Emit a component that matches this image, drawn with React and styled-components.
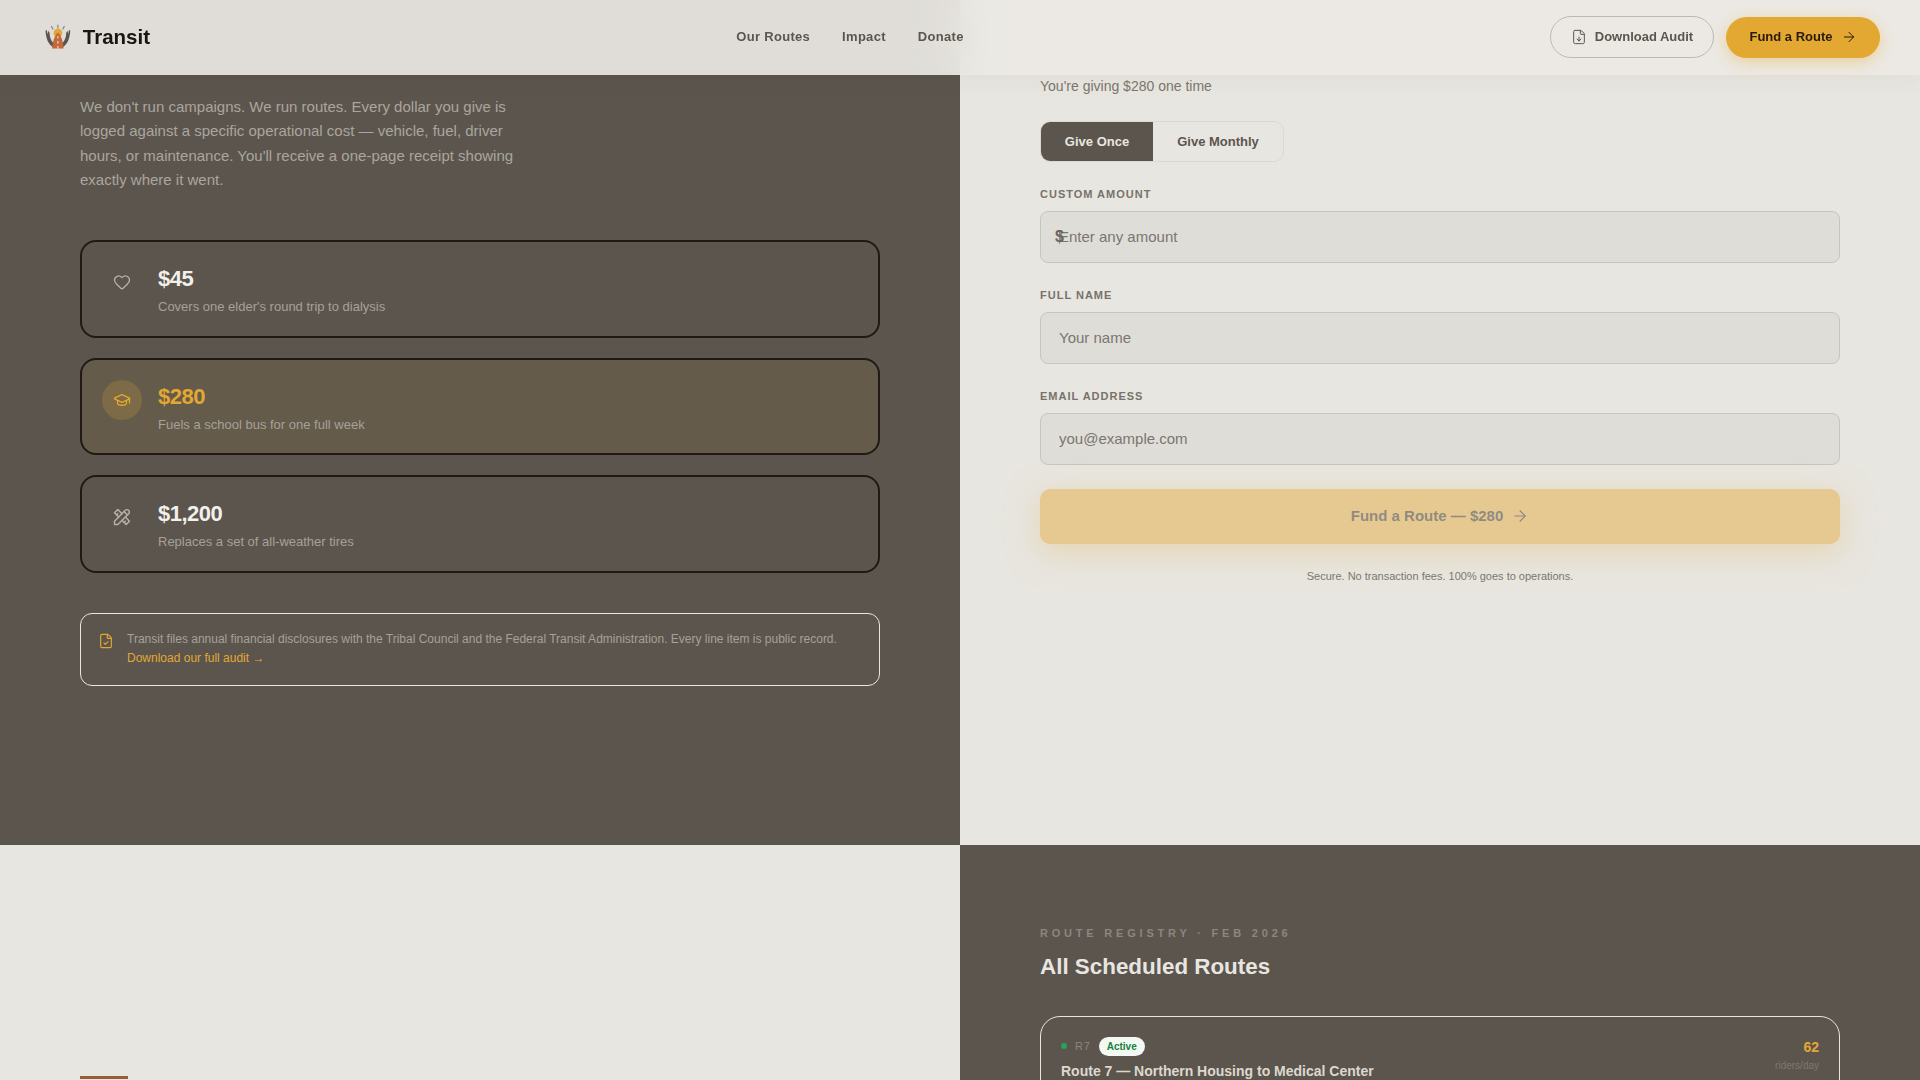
import React from 'react';
import styled, { createGlobalStyle } from 'styled-components';
import { ArrowRight, FileCheck, FileDown, GraduationCap, Heart } from 'lucide-react';
import { TbTools } from 'react-icons/tb';

const GlobalStyle = createGlobalStyle`
    * { box-sizing: border-box; }
    body {
        margin: 0;
        background: #e8e6e0;
        font-family: "Liberation Sans", Arial, sans-serif;
        color: #1a1510;
    }
`;

const tiers = [
    { amount: '$45', text: "Covers one elder's round trip to dialysis", Icon: Heart, size: 18 },
    { amount: '$280', text: 'Fuels a school bus for one full week', Icon: GraduationCap, size: 18, selected: true },
    { amount: '$1,200', text: 'Replaces a set of all-weather tires', Icon: TbTools, size: 20 },
];

const fields = [
    { label: 'Custom amount', placeholder: 'Enter any amount', prefix: true },
    { label: 'Full name', placeholder: 'Your name' },
    { label: 'Email address', placeholder: 'you@example.com' },
];

function Logo() {
    return (
        <svg width="28" height="26" viewBox="0 0 28 26" aria-hidden="true">
            <g stroke="#8d857b" strokeWidth="1.2" strokeLinecap="round">
                <path d="M9 5 7.6 2.4M14 4V1M19 5l1.4-2.6" />
            </g>
            <circle cx="14" cy="9" r="4.4" fill="#e2a832" />
            <path d="M1.5 7c.6 6 1.6 11 5.5 14.5l3.5 3-.4-5C7 17 5.6 13 5.6 8.6L4.4 6.6 3.6 10 2.8 5.8z" fill="#5c554e" />
            <path d="M26.5 7c-.6 6-1.6 11-5.5 14.5l-3.5 3 .4-5C21 17 22.4 13 22.4 8.6l1.2-2 .8 3.4.8-4.2z" fill="#5c554e" />
            <path d="M14 8.5c3 2.6 5 7.6 5.8 16H8.200C9 16 11 11.1 14 8.500z" fill="#c4683a" />
            <path d="M14 12v2.500M14 17v2.500M14 22v2.500" stroke="#f0d9b0" strokeWidth="1.2" />
        </svg>
    );
}

export default function App() {
    return (
        <Shell>
            <GlobalStyle />
            <Nav>
                <Brand>
                    <Logo />
                    <BrandName>Transit</BrandName>
                </Brand>
                <NavLinks>
                    <NavLink href="#">Our Routes</NavLink>
                    <NavLink href="#">Impact</NavLink>
                    <NavLink href="#">Donate</NavLink>
                </NavLinks>
                <NavActions>
                    <AuditButton>
                        <FileDown size={16} strokeWidth={1.5} />
                        Download Audit
                    </AuditButton>
                    <FundButton>
                        Fund a Route
                        <ArrowRight size={16} strokeWidth={1.5} />
                    </FundButton>
                </NavActions>
            </Nav>

            <Page>
                <Split>
                    <DarkPanel>
                        <Lead>
                            We don't run campaigns. We run routes. Every dollar you give is logged against a
                            specific operational cost — vehicle, fuel, driver hours, or maintenance. You'll
                            receive a one-page receipt showing exactly where it went.
                        </Lead>
                        <Tiers>
                            {tiers.map(({ amount, text, Icon, size, selected }) => (
                                <Tier key={amount} $selected={selected}>
                                    <TierIcon $selected={selected}>
                                        <Icon size={size} strokeWidth={1.75} />
                                    </TierIcon>
                                    <div>
                                        <TierAmount $selected={selected}>{amount}</TierAmount>
                                        <TierText>{text}</TierText>
                                    </div>
                                </Tier>
                            ))}
                        </Tiers>
                        <AuditNote>
                            <AuditIcon>
                                <FileCheck size={16} strokeWidth={1.75} />
                            </AuditIcon>
                            <p>
                                Transit files annual financial disclosures with the Tribal Council and the
                                Federal Transit Administration. Every line item is public record.{' '}
                                <a href="#">Download our full audit →</a>
                            </p>
                        </AuditNote>
                    </DarkPanel>

                    <LightPanel>
                        <FormSub>You're giving $280 one time</FormSub>
                        <Toggle>
                            <ToggleOption $active>Give Once</ToggleOption>
                            <ToggleOption>Give Monthly</ToggleOption>
                        </Toggle>
                        {fields.map(field => (
                            <Field key={field.label}>
                                <FieldLabel>{field.label}</FieldLabel>
                                <InputWrap>
                                    {field.prefix && <Prefix>$</Prefix>}
                                    <Input placeholder={field.placeholder} />
                                </InputWrap>
                            </Field>
                        ))}
                        <SubmitButton>
                            Fund a Route — $280
                            <ArrowRight size={18} strokeWidth={1.5} />
                        </SubmitButton>
                        <Secure>Secure. No transaction fees. 100% goes to operations.</Secure>
                    </LightPanel>
                </Split>

                <Split>
                    <StoryPanel>
                        <AccentBar />
                    </StoryPanel>
                    <RegistryPanel>
                        <Eyebrow>Route Registry · Feb 2026</Eyebrow>
                        <RegistryTitle>All Scheduled Routes</RegistryTitle>
                        <RouteCard>
                            <div>
                                <RouteMeta>
                                    <StatusDot />
                                    <RouteCode>R7</RouteCode>
                                    <StatusPill>Active</StatusPill>
                                </RouteMeta>
                                <RouteName>Route 7 — Northern Housing to Medical Center</RouteName>
                            </div>
                            <Riders>
                                <strong>62</strong>
                                <span>riders/day</span>
                            </Riders>
                        </RouteCard>
                    </RegistryPanel>
                </Split>
            </Page>
        </Shell>
    );
}

const Shell = styled.div`
    position: relative;
    height: 100vh;
    overflow: hidden;
`;

const Nav = styled.nav`
    position: fixed;
    top: 0;
    left: 0;
    right: 0;
    z-index: 10;
    height: 75px;
    padding: 0 40px 1px;
    display: flex;
    align-items: center;
    justify-content: space-between;
    background: rgba(235, 233, 228, 0.92);
    backdrop-filter: blur(20px);
    box-shadow: 0 4px 24px rgba(60, 50, 40, 0.05);
`;

const Brand = styled.div`
    display: flex;
    align-items: center;
    gap: 11px;
    width: 110px;
    padding-left: 4px;
`;

const BrandName = styled.span`
    font-size: 20.5px;
    font-weight: 700;
    color: #1a1510;
`;

const NavLinks = styled.div`
    display: flex;
    gap: 32px;
    padding-bottom: 2px;
`;

const NavLink = styled.a`
    font-size: 13px;
    font-weight: 700;
    letter-spacing: 0.3px;
    color: #5c554e;
    text-decoration: none;
`;

const NavActions = styled.div`
    display: flex;
    align-items: center;
    gap: 12px;
`;

const AuditButton = styled.button`
    height: 42px;
    width: 164px;
    padding: 0 0 1px;
    display: flex;
    align-items: center;
    justify-content: center;
    gap: 8px;
    background: transparent;
    border: 1px solid #bdb9b2;
    border-radius: 999px;
    font: 700 13px "Liberation Sans", Arial, sans-serif;
    color: #5c554e;
`;

const FundButton = styled.button`
    height: 41px;
    width: 154px;
    padding: 0 0 1px;
    display: flex;
    align-items: center;
    justify-content: center;
    gap: 8px;
    background: #e2a832;
    border: none;
    border-radius: 999px;
    box-shadow: 0 4px 16px rgba(226, 168, 50, 0.4);
    font: 700 13px "Liberation Sans", Arial, sans-serif;
    color: #2a1a0e;
`;

/* the page sits scrolled down a little, the nav stays on top of it */
const Page = styled.main`
    margin-top: -120px;
`;

const Split = styled.section`
    display: grid;
    grid-template-columns: 960px 960px;
`;

const DarkPanel = styled.div`
    height: 965px;
    padding: 215px 80px 0;
    background: #5c554e;
`;

const Lead = styled.p`
    margin: 0 0 48px;
    max-width: 440px;
    font-size: 15px;
    line-height: 24.3px;
    color: #aaa69e;
`;

const Tiers = styled.div`
    display: flex;
    flex-direction: column;
    gap: 20px;
`;

const Tier = styled.div`
    height: 97.5px;
    padding: 20px;
    display: flex;
    gap: 16px;
    border: 2px solid #1f1a15;
    border-radius: 16px;
    background: ${p => (p.$selected ? '#645b4b' : 'transparent')};
`;

const TierIcon = styled.div`
    width: 40px;
    height: 40px;
    flex-shrink: 0;
    display: flex;
    align-items: center;
    justify-content: center;
    border-radius: 50%;
    background: ${p => (p.$selected ? 'rgba(226, 168, 50, 0.2)' : 'transparent')};
    color: ${p => (p.$selected ? '#e2a832' : '#b5b1a9')};
`;

const TierAmount = styled.div`
    font-size: 22px;
    line-height: 34px;
    font-weight: 700;
    letter-spacing: -0.5px;
    color: ${p => (p.$selected ? '#e2a832' : '#f2f0eb')};
`;

const TierText = styled.div`
    margin-top: 1px;
    font-size: 13px;
    line-height: 19px;
    color: #a5a199;
`;

const AuditNote = styled.div`
    margin-top: 40.5px;
    padding: 16px;
    display: flex;
    gap: 13px;
    border: 1px solid #e8e6e0;
    border-radius: 12px;

    p {
        margin: 0;
        font-size: 12px;
        line-height: 19.2px;
        color: #a5a199;
    }
    a {
        color: #e2a832;
        text-decoration: none;
    }
`;

const AuditIcon = styled.div`
    flex-shrink: 0;
    height: 20px;
    padding: 3px 0 0 1px;
    color: #e2a832;
`;

const LightPanel = styled.div`
    height: 965px;
    padding: 195px 80px 0;
    background: #e8e6e0;
`;

const FormSub = styled.p`
    margin: 0 0 24px;
    font-size: 14px;
    line-height: 22px;
    color: #7b766f;
`;

const Toggle = styled.div`
    width: fit-content;
    height: 41px;
    margin-bottom: 24px;
    display: flex;
    border: 1px solid #dcd9d2;
    border-radius: 10px;
    overflow: hidden;
`;

const ToggleOption = styled.button`
    width: ${p => (p.$active ? '112px' : '130px')};
    border: none;
    background: ${p => (p.$active ? '#5c554e' : 'transparent')};
    font: 700 13px "Liberation Sans", Arial, sans-serif;
    color: ${p => (p.$active ? '#e8e6e0' : '#5c554e')};
`;

const Field = styled.div`
    margin-bottom: 24px;
`;

const FieldLabel = styled.label`
    display: block;
    margin-bottom: 9px;
    font-size: 11px;
    line-height: 16px;
    font-weight: 700;
    letter-spacing: 1px;
    text-transform: uppercase;
    color: #77726b;
`;

const InputWrap = styled.div`
    position: relative;
`;

const Prefix = styled.span`
    position: absolute;
    left: 15px;
    top: 50%;
    transform: translateY(-52%);
    font-size: 16px;
    font-weight: 700;
    color: #6b665f;
`;

const Input = styled.input`
    display: block;
    width: 100%;
    height: 52px;
    padding: 0 18px 2px;
    background: #dfddd8;
    border: 1px solid #c8c5be;
    border-radius: 8px;
    font: 15px "Liberation Sans", Arial, sans-serif;
    color: #1a1510;
    &::placeholder {
        color: #7b766f;
        opacity: 1;
    }
`;

const SubmitButton = styled.button`
    width: 100%;
    height: 55px;
    padding-bottom: 3px;
    display: flex;
    align-items: center;
    justify-content: center;
    gap: 8px;
    border: none;
    border-radius: 10px;
    background: #e2a832;
    box-shadow: 0 8px 32px rgba(226, 168, 50, 0.6);
    opacity: 0.45;
    font: 700 15px "Liberation Sans", Arial, sans-serif;
    color: #2a1a0e;
`;

const Secure = styled.p`
    margin: 24px 0 0;
    text-align: center;
    font-size: 11px;
    line-height: 16px;
    color: #7b766f;
`;

const StoryPanel = styled.div`
    padding: 231px 80px 0;
    background: #e8e6e0;
`;

const AccentBar = styled.div`
    width: 48px;
    height: 3px;
    background: #9b5a3a;
`;

const RegistryPanel = styled.div`
    height: 400px;
    padding: 80px 80px 0;
    background: #5c554e;
`;

const Eyebrow = styled.div`
    margin-bottom: 12px;
    font-size: 11px;
    line-height: 16px;
    font-weight: 700;
    letter-spacing: 3.8px;
    text-transform: uppercase;
    color: #8b8680;
`;

const RegistryTitle = styled.h2`
    margin: 0 0 35px;
    font-size: 22.4px;
    line-height: 28px;
    font-weight: 700;
    color: #e8e6e0;
`;

const RouteCard = styled.div`
    padding: 20px;
    display: flex;
    justify-content: space-between;
    border: 1px solid #e8e6e0;
    border-radius: 20px;
`;

const RouteMeta = styled.div`
    height: 19px;
    display: flex;
    align-items: center;
    margin-bottom: 5px;
`;

const StatusDot = styled.span`
    width: 6px;
    height: 6px;
    margin: 0 8px 1px 0;
    border-radius: 50%;
    background: #22a55b;
`;

const RouteCode = styled.span`
    margin: 0 8px 1px 0;
    font-size: 11px;
    letter-spacing: 0.8px;
    color: #8b8680;
`;

const StatusPill = styled.span`
    height: 19px;
    padding: 0 8px;
    display: flex;
    align-items: center;
    border-radius: 10px;
    background: #f4f8f3;
    font-size: 10px;
    font-weight: 700;
    color: #15803d;
`;

const RouteName = styled.div`
    font-size: 14px;
    line-height: 20px;
    font-weight: 700;
    color: #dcd8cf;
`;

const Riders = styled.div`
    display: flex;
    flex-direction: column;
    align-items: flex-end;

    strong {
        font-size: 14px;
        line-height: 20px;
        color: #e2a832;
    }
    span {
        margin-top: 1px;
        font-size: 10px;
        line-height: 16px;
        color: #7d7871;
    }
`;
